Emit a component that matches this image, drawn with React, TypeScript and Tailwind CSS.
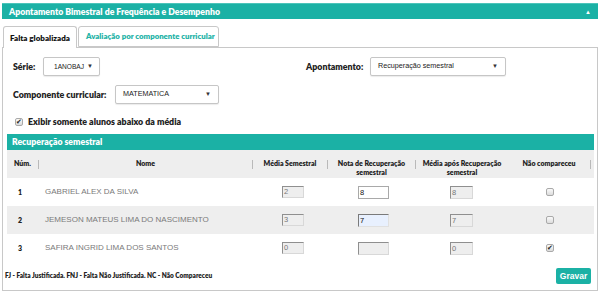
import React from "react";

type Aluno = {
  num: number;
  nome: string;
  media: string;
  nota: string;
  mediaApos: string;
  naoCompareceu: boolean;
  notaState: "normal" | "autofill" | "disabled";
};

const alunos: Aluno[] = [
  { num: 1, nome: "GABRIEL ALEX DA SILVA", media: "2", nota: "8", mediaApos: "8", naoCompareceu: false, notaState: "normal" },
  { num: 2, nome: "JEMESON MATEUS LIMA DO NASCIMENTO", media: "3", nota: "7", mediaApos: "7", naoCompareceu: false, notaState: "autofill" },
  { num: 3, nome: "SAFIRA INGRID LIMA DOS SANTOS", media: "0", nota: "", mediaApos: "0", naoCompareceu: true, notaState: "disabled" },
];

const Select = ({ value, w, pad = "pl-[7px] pr-[7px] text-[7.2px]" }: { value: string; w: string; pad?: string }) => (
  <div
    className={`${w} ${pad} h-[19px] flex items-center justify-between border border-[#c6c6c6] bg-white rounded-[2px] shadow-[0_1px_1px_rgba(0,0,0,0.08)] font-['Liberation_Sans',Arial,sans-serif] text-[#222]`}
  >
    <span>{value}</span>
    <span className="text-[6px] text-[#333]">▼</span>
  </div>
);

const Check = ({ checked }: { checked: boolean }) => (
  <div className="w-[8px] h-[8px] rounded-[2px] border border-[#a9a9a9] bg-gradient-to-b from-[#fafafa] to-[#dcdcdc] flex items-center justify-center">
    {checked && <span className="text-[7px] leading-none text-[#222] -mt-px">✔</span>}
  </div>
);

const HeadCell = ({ children, sep = true }: { children?: React.ReactNode; sep?: boolean }) => (
  <div className="flex items-start h-full">
    <div className="flex-1 text-center pt-[9px] leading-[9px]">{children}</div>
    {sep && <div className="w-px h-[9px] mt-[10px] bg-[#b9b9b9] shrink-0" />}
  </div>
);

export default function App() {
  return (
    <div className="w-[600px] h-[294px] bg-white overflow-hidden px-[2px] pt-[3px] font-[Lato,sans-serif]">
      <div className="h-[16px] bg-[#1bb1a5] flex items-center justify-between pl-[7px] pr-[7px] border-t border-[#4cc4ba]">
        <span className="text-white font-extrabold text-[8.7px]">Apontamento Bimestral de Frequência e Desempenho</span>
        <span className="text-white text-[6px] leading-none">▲</span>
      </div>

      <div className="mt-[7px] flex h-[21px] pl-px gap-px relative z-10">
        <div className="w-[74px] h-[22px] bg-white border border-b-0 border-[#c8c8c8] rounded-t-[3px] flex items-center pl-[6px] text-[8px] font-extrabold text-[#111]">
          Falta globalizada
        </div>
        <div className="w-[141px] h-[21px] bg-white border border-[#c8c8c8] rounded-t-[3px] flex items-center pl-[7px] text-[7.8px] font-extrabold text-[#22b2a6]">
          Avaliação por componente curricular
        </div>
      </div>

      <div className="border border-[#c8c8c8] h-[244px] flex flex-col">
        <div className="flex items-center pt-[9px] pl-[10px]">
          <div className="w-[293px] flex items-center">
            <span className="w-[30px] text-[8.8px] font-extrabold text-[#222]">Série:</span>
            <Select value="1ANOBAJ" w="w-[57px]" pad="pl-[10px] pr-[6px] text-[6.6px]" />
          </div>
          <div className="flex items-center">
            <span className="w-[64px] text-[8.8px] font-extrabold text-[#222]">Apontamento:</span>
            <Select value="Recuperação semestral" w="w-[136px]" />
          </div>
        </div>

        <div className="flex items-center mt-[9px] pl-[10px]">
          <span className="w-[102px] text-[8.8px] font-extrabold text-[#222]">Componente curricular:</span>
          <Select value="MATEMATICA" w="w-[104px]" />
        </div>

        <div className="flex items-center mt-[12px] h-[12px] pl-[12px] gap-[5px]">
          <Check checked />
          <span className="text-[8.8px] font-extrabold text-[#222]">Exibir somente alunos abaixo da média</span>
        </div>

        <div className="mt-[6px] ml-[4px] mr-[3px]">
          <div className="h-[16px] bg-[#1bb1a5] flex items-center pl-[5px] text-white font-extrabold text-[8.7px]">
            Recuperação semestral
          </div>
          <div className="grid grid-cols-[32px_214px_75px_88px_92px_83px_3px] h-[28px] bg-[#eeeeee] text-[7px] font-extrabold text-[#222]">
            <HeadCell>Núm.</HeadCell>
            <HeadCell>Nome</HeadCell>
            <HeadCell>Média Semestral</HeadCell>
            <HeadCell>
              Nota de Recuperação
              <br />
              semestral
            </HeadCell>
            <HeadCell sep={false}>
              Média após Recuperação
              <br />
              semestral
            </HeadCell>
            <HeadCell>Não compareceu</HeadCell>
            <div />
          </div>
          {alunos.map((a, i) => (
            <div
              key={a.num}
              className={`grid grid-cols-[32px_214px_75px_88px_92px_83px_3px] h-[28px] items-center ${i === 1 ? "bg-[#eeeeee]" : "bg-white"}`}
            >
              <div className="pl-[11px] text-[7px] font-extrabold text-[#222]">{a.num}</div>
              <div className="pl-[6px] font-['Liberation_Sans',Arial,sans-serif] text-[8px] text-[#7a7a7a]">{a.nome}</div>
              <div className="pl-[29px]">
                <div className="w-[22px] h-[12px] bg-[#eeeeee] border border-[#d8d8d8] border-t-[#8f8f8f] border-l-[#8f8f8f] font-['Liberation_Sans',Arial,sans-serif] text-[7.5px] leading-[10px] text-[#777] pl-px">
                  {a.media}
                </div>
              </div>
              <div className="pl-[30px]">
                {a.notaState === "normal" && (
                  <div className="w-[31px] h-[13px] bg-white border border-[#a9a9a9] font-['Liberation_Sans',Arial,sans-serif] text-[7.5px] leading-[11px] text-[#111] pl-px">
                    {a.nota}
                  </div>
                )}
                {a.notaState === "autofill" && (
                  <div className="w-[31px] h-[13px] bg-[#e8f0fe] border border-[#e0e0e0] border-t-[#7a7a7a] border-l-[#7a7a7a] font-['Liberation_Sans',Arial,sans-serif] text-[7.5px] leading-[11px] text-[#111] pl-px">
                    {a.nota}
                  </div>
                )}
                {a.notaState === "disabled" && (
                  <div className="w-[31px] h-[13px] bg-[#eeeeee] border border-[#d8d8d8] border-t-[#8f8f8f] border-l-[#8f8f8f]" />
                )}
              </div>
              <div className="pl-[34px]">
                <div className="w-[23px] h-[13px] bg-[#eeeeee] border border-[#d8d8d8] border-t-[#8f8f8f] border-l-[#8f8f8f] font-['Liberation_Sans',Arial,sans-serif] text-[7.5px] leading-[11px] text-[#777] pl-px">
                  {a.mediaApos}
                </div>
              </div>
              <div className="pl-[38px]">
                <Check checked={a.naoCompareceu} />
              </div>
              <div />
            </div>
          ))}
        </div>

        <div className="flex items-center justify-between mt-[6px] h-[16px] pl-[2px] pr-[6px]">
          <span className="text-[6.5px] font-extrabold text-[#222]">
            FJ - Falta Justificada. FNJ - Falta Não Justificada. NC - Não Compareceu
          </span>
          <div className="w-[35px] h-[16px] bg-[#1bb1a5] rounded-[2px] flex items-center justify-center font-['Liberation_Sans',Arial,sans-serif] font-bold text-white text-[8.5px]">
            Gravar
          </div>
        </div>
      </div>
    </div>
  );
}
